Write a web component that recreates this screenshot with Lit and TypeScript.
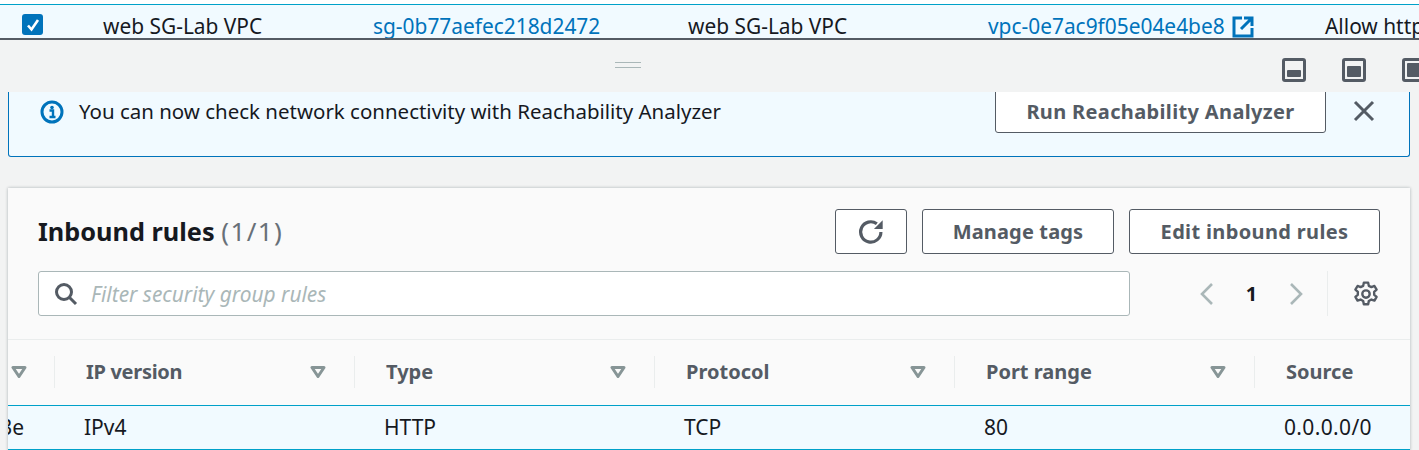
import { LitElement, html, css, svg } from "lit";
import { customElement } from "lit/decorators.js";

const funnel = html`<svg class="funnel" viewBox="0 0 16 12" width="16" height="12"><path d="M2 1.5h12L8 10.5z" fill="none" stroke="#879596" stroke-width="3" stroke-linejoin="round"/></svg>`;

const panelIcon = (y: number) => html`<svg viewBox="0 0 24 24" width="24" height="24"><rect x="1.5" y="1.5" width="21" height="21" rx="1.5" fill="none" stroke="#545b64" stroke-width="3"/>${svg`<rect x="5" y="${y}" width="14" height="${19 - y}" rx="1" fill="#545b64"/>`}</svg>`;

@customElement("app-root")
export class AppRoot extends LitElement {
  static styles = css`
    :host { display: block; width: 1419px; height: 450px; overflow: hidden; background: #f2f3f3; font-family: "Noto Sans", sans-serif; font-size: 20px; color: #16191f; }
    * { box-sizing: border-box; }
    a { color: #0073bb; text-decoration: none; }
    .strip { height: 4px; background: #fff; }
    .selected { height: 36px; background: #f1faff; border-top: 1px solid #00a1c9; border-bottom: 2px solid #545b64; display: grid; grid-template-columns: 103px 270px 315px 300px 337px 1fr; grid-template-rows: 27px; padding-top: 6px; align-items: center; white-space: nowrap; overflow: hidden; font-size: 20.9px; }
    .cell { margin-top: 2px; }
    .check { margin-left: 22px; width: 21px; height: 21px; background: #0073bb; border-radius: 3px; display: flex; align-items: center; justify-content: center; }
    .vpc { display: flex; align-items: center; gap: 7px; }
    .vpc svg { margin-top: 2px; }
    .splitter { height: 52px; display: flex; position: relative; align-items: flex-start; justify-content: flex-end; gap: 36px; padding: 18px 0 0 0; margin-right: -7px; }
    .handle { position: absolute; left: 615px; top: 22px; width: 26px; height: 6px; border-top: 1px solid #aab7b8; border-bottom: 1px solid #aab7b8; }
    .alert { margin-left: 8px; width: 1402px; height: 65px; background: #f1faff; border: 1px solid #0073bb; border-top: 0; border-radius: 0 0 3px 3px; display: flex; align-items: flex-start; padding-left: 31px; overflow: hidden; font-size: 20.48px; }
    .alert .info { margin-top: 8px; display: block; }
    .alert .msg { margin-left: 15px; margin-top: 4px; line-height: 30px; flex: 1; }
    .btn { height: 45px; background: #fff; border: 1px solid #545b64; border-radius: 3px; color: #545b64; font-weight: 700; font-size: 20px; display: flex; align-items: center; justify-content: center; white-space: nowrap; letter-spacing: 0.35px; }
    .alert .btn { width: 331px; margin-top: -4px; height: 45px; padding-top: 2px; }
    .close { margin: 8px 34px 0 27px; display: block; }
    .card { margin: 31px 9px 0 8px; height: 263px; background: #fafafa; box-shadow: 0 0 3px rgba(0,28,36,.3); }
    .head { height: 83px; display: flex; align-items: flex-start; padding: 21px 30px 0 30px; }
    .title { flex: 1; font-size: 25.3px; font-weight: 700; line-height: 44px; }
    .title span { font-weight: 400; color: #687078; font-size: 26px; letter-spacing: 1.4px; }
    .actions { display: flex; gap: 15px; }
    .refresh { width: 72px; }
    .tags { width: 192px; letter-spacing: 0.15px; }
    .edit { width: 251px; }
    .filter { height: 69px; display: flex; align-items: flex-start; padding-left: 30px; border-bottom: 1px solid #eaeded; }
    .input { width: 1092px; height: 45px; background: #fff; border: 1px solid #aab7b8; border-radius: 3px; display: flex; align-items: center; padding-left: 15px; gap: 13px; font-style: italic; color: #aab7b8; font-size: 20.9px; }
    .pager { display: flex; align-items: center; height: 45px; margin-left: 70px; }
    .num { font-weight: 700; width: 75px; text-align: center; font-size: 20px; }
    .gear-wrap { margin-left: 24px; padding-left: 25px; border-left: 1px solid #eaeded; height: 45px; display: flex; align-items: center; }
    .cols { height: 65px; padding-bottom: 2px; display: grid; grid-template-columns: 46px repeat(4, 300px) 1fr; align-items: center; overflow: hidden; font-weight: 700; color: #545b64; }
    .th { height: 32px; border-left: 1px solid #eaeded; padding: 0 28px 0 31px; display: flex; align-items: center; justify-content: space-between; white-space: nowrap; }
    .th.first { border-left: 0; padding: 0 28px 0 0; justify-content: flex-end; }
    .th.first .funnel { margin-right: -1px; }
    .th.tight { letter-spacing: -0.3px; }
    .row { height: 45px; padding-bottom: 2px; background: #f1faff; border-top: 1px solid #00a1c9; border-bottom: 1px solid #00a1c9; display: grid; grid-template-columns: 46px repeat(4, 300px) 1fr; align-items: center; overflow: hidden; white-space: nowrap; font-size: 21px; }
    .td { padding-left: 30px; }
    .td.wide { letter-spacing: 0.35px; }
    .td.first { padding-left: 0; text-align: right; overflow: hidden; direction: rtl; padding-right: 30px; margin-right: 0; }
  `;

  render() {
    return html`
      <div class="strip"></div>
      <div class="selected">
        <div class="check"><svg viewBox="0 0 16 16" width="16" height="16"><path d="M3 8.500l3.500 4L13 3" fill="none" stroke="#fff" stroke-width="2.600"/></svg></div>
        <div class="cell">web SG-Lab VPC</div>
        <a class="cell">sg-0b77aefec218d2472</a>
        <div class="cell">web SG-Lab VPC</div>
        <div class="vpc cell"><a>vpc-0e7ac9f05e04e4be8</a>
          <svg viewBox="0 0 22 22" width="22" height="22"><path d="M10 2H2v18h18v-8M12 2h8v8M20 2L9 13" fill="none" stroke="#0073bb" stroke-width="3"/></svg></div>
        <div class="cell">Allow http</div>
      </div>
      <div class="splitter">
        <div class="handle"></div>
        ${panelIcon(12)} ${panelIcon(8)} ${panelIcon(5)}
      </div>
      <div class="alert">
        <svg class="info" viewBox="0 0 24 24" width="24" height="24"><circle cx="12" cy="12" r="10" fill="none" stroke="#0073bb" stroke-width="3"/><circle cx="12" cy="7.500" r="1.800" fill="#0073bb"/><path d="M9.500 10.500H13V16.500M9.500 17h6" fill="none" stroke="#0073bb" stroke-width="2.400"/></svg>
        <div class="msg">You can now check network connectivity with Reachability Analyzer</div>
        <div class="btn">Run Reachability Analyzer</div>
        <svg class="close" viewBox="0 0 22 22" width="22" height="22"><path d="M2 2l18 18M20 2L2 20" fill="none" stroke="#545b64" stroke-width="3"/></svg>
      </div>
      <div class="card">
        <div class="head">
          <div class="title">Inbound rules <span>(1/1)</span></div>
          <div class="actions">
            <div class="btn refresh"><svg viewBox="0 0 24 24" width="28" height="28"><path d="M20.500 12A8.700 8.700 0 1 1 17 5" fill="none" stroke="#545b64" stroke-width="2.700"/><path d="M14.500 9.500H22V2z" fill="#545b64"/></svg></div>
            <div class="btn tags">Manage tags</div>
            <div class="btn edit">Edit inbound rules</div>
          </div>
        </div>
        <div class="filter">
          <div class="input">
            <svg viewBox="0 0 24 24" width="24" height="24"><circle cx="10" cy="10" r="7.500" fill="none" stroke="#545b64" stroke-width="3"/><path d="M15.500 15.500L22 22" stroke="#545b64" stroke-width="3"/></svg>
            <span>Filter security group rules</span>
          </div>
          <div class="pager">
            <svg viewBox="0 0 14 24" width="14" height="24"><path d="M12 2L2 12l10 10" fill="none" stroke="#aab7b8" stroke-width="2.600"/></svg>
            <div class="num">1</div>
            <svg viewBox="0 0 14 24" width="14" height="24"><path d="M2 2l10 10L2 22" fill="none" stroke="#aab7b8" stroke-width="2.600"/></svg>
            <div class="gear-wrap"><svg viewBox="0 0 24 24" width="26" height="26"><path d="M10 1.500h4l.6 3 2.400 1.200 2.800-1.100 2 3.400-2.300 2 .1 2.800 2.200 1.900-2 3.400-2.800-1-2.400 1.400-.6 2.900h-4l-.6-2.900L7 17.100l-2.800 1-2-3.400 2.200-1.900.1-2.800-2.300-2 2-3.400 2.800 1.100L9.400 4.500z" fill="none" stroke="#545b64" stroke-width="2.200" stroke-linejoin="round"/><circle cx="12" cy="12" r="3.400" fill="none" stroke="#545b64" stroke-width="2.200"/></svg></div>
          </div>
        </div>
        <div class="cols">
          <div class="th first">${funnel}</div>
          <div class="th tight">IP version ${funnel}</div>
          <div class="th">Type ${funnel}</div>
          <div class="th">Protocol ${funnel}</div>
          <div class="th">Port range ${funnel}</div>
          <div class="th">Source</div>
        </div>
        <div class="row">
          <div class="td first">3e</div>
          <div class="td">IPv4</div>
          <div class="td">HTTP</div>
          <div class="td">TCP</div>
          <div class="td">80</div>
          <div class="td wide">0.0.0.0/0</div>
        </div>
      </div>
    `;
  }
}
